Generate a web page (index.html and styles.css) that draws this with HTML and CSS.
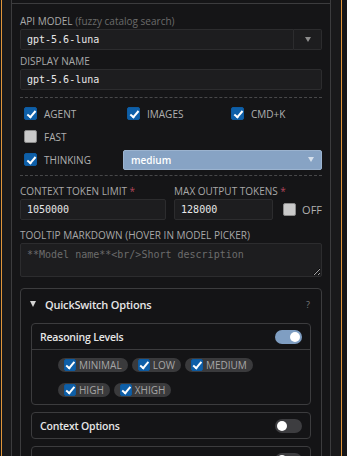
FILE: index.html
```html
<!DOCTYPE html>
<html lang="en">
<head>
    <meta charset="UTF-8">
    <meta name="viewport" content="width=device-width, initial-scale=1.0">
    <title>Model settings</title>
    <link rel="stylesheet" href="styles.css">
</head>
<body>
    <div class="frame">
        <div class="panel">
            <div class="panel-top"></div>
            <div class="panel-body">
                <!-- Model -->
                <label class="field-label">API MODEL <span class="hint">(fuzzy catalog search)</span></label>
                <div class="combo">
                    <input class="text-input" value="gpt-5.6-luna">
                    <div class="combo-btn"><span class="caret"></span></div>
                </div>

                <label class="field-label gap">DISPLAY NAME</label>
                <input class="text-input" value="gpt-5.6-luna">

                <div class="sep"></div>

                <!-- Capabilities -->
                <div class="caps">
                    <div class="cap"><span class="cb on"></span>AGENT</div>
                    <div class="cap"><span class="cb on"></span>IMAGES</div>
                    <div class="cap"><span class="cb on"></span>CMD+K</div>
                    <div class="cap"><span class="cb"></span>FAST</div>
                    <div></div>
                    <div></div>
                    <div class="cap"><span class="cb on"></span>THINKING</div>
                    <div class="thinking-select">medium<span class="caret light"></span></div>
                </div>

                <div class="sep flush"></div>

                <!-- Tokens -->
                <div class="token-row">
                    <div class="token-field wide">
                        <label class="field-label">CONTEXT TOKEN LIMIT <span class="req">*</span></label>
                        <input class="text-input" value="1050000">
                    </div>
                    <div class="token-field narrow">
                        <label class="field-label">MAX OUTPUT TOKENS <span class="req">*</span></label>
                        <input class="text-input" value="128000">
                    </div>
                    <div class="cap off-toggle"><span class="cb"></span>OFF</div>
                </div>

                <label class="field-label tip">TOOLTIP MARKDOWN (HOVER IN MODEL PICKER)</label>
                <textarea class="text-area" placeholder="**Model name**<br/>Short description"></textarea>

                <!-- QuickSwitch -->
                <div class="qs">
                    <div class="qs-head">
                        <span class="qs-arrow"></span>
                        <span class="qs-title">QuickSwitch Options</span>
                        <span class="qs-help">?</span>
                    </div>
                    <div class="qs-body">
                        <div class="card">
                            <div class="card-head open">
                                <span>Reasoning Levels</span>
                                <span class="toggle on"></span>
                            </div>
                            <div class="chips">
                                <span class="chip"><span class="cb on"></span>MINIMAL</span>
                                <span class="chip"><span class="cb on"></span>LOW</span>
                                <span class="chip"><span class="cb on"></span>MEDIUM</span>
                                <span class="chip"><span class="cb on"></span>HIGH</span>
                                <span class="chip"><span class="cb on"></span>XHIGH</span>
                            </div>
                        </div>
                        <div class="card">
                            <div class="card-head">
                                <span>Context Options</span>
                                <span class="toggle"></span>
                            </div>
                        </div>
                        <div class="card">
                            <div class="card-head">
                                <span>Cost Tracking</span>
                                <span class="toggle"></span>
                            </div>
                        </div>
                    </div>
                </div>
            </div>
        </div>
    </div>
</body>
</html>
```

FILE: styles.css
```css
* {
    box-sizing: border-box;
}
body {
    margin: 0;
    background: #161618;
    font-family: "Open Sans", "Noto Sans", sans-serif;
    overflow: hidden;
}
.frame {
    width: 341px;
    height: 456px;
    margin-left: 1px;
    padding: 0 10px 0 9px;
    border-left: 1px solid #e0953a;
    border-right: 1px solid #e0953a;
    background: #19191b;
    overflow: hidden;
}
.panel {
    width: 320px;
    min-height: 456px;
    border-left: 1px solid #3c3c3e;
    border-right: 1px solid #3c3c3e;
    background: #151517;
}
.panel-top {
    height: 4px;
    border-bottom: 1px solid #3c3c3e;
}
.panel-body {
    padding: 11px 8px 0;
}

/* labels & inputs */
.field-label {
    display: block;
    font-size: 10px;
    line-height: 13px;
    color: #a8a8a8;
    margin-bottom: 1px;
    white-space: nowrap;
}
.field-label.gap {
    margin-top: 5px;
}
.field-label .hint {
    color: #6b6b6b;
}
.field-label .req {
    color: #b0455a;
}
.text-input {
    display: block;
    width: 100%;
    height: 21px;
    padding: 0 6px;
    border: 1px solid #2c2c2e;
    border-radius: 2px;
    background: #1d1d1f;
    color: #e8e8e8;
    font: 10px "DejaVu Sans Mono", monospace;
    outline: none;
}
.combo {
    display: flex;
}
.combo .text-input {
    flex: 1;
    border-radius: 2px 0 0 2px;
}
.combo-btn {
    width: 28px;
    height: 21px;
    border: 1px solid #2c2c2e;
    border-left: none;
    border-radius: 0 2px 2px 0;
    background: #1d1d1f;
    display: flex;
    align-items: center;
    justify-content: center;
}
.caret {
    width: 0;
    height: 0;
    border-left: 3px solid transparent;
    border-right: 3px solid transparent;
    border-top: 5px solid #8c8c8c;
}
.caret.light {
    border-top-color: #d6e0ec;
}
.sep {
    margin-top: 7px;
    border-top: 1px dashed #48484a;
}
.sep.flush {
    margin-top: 0;
}

/* checkboxes */
.cb {
    position: relative;
    display: inline-block;
    flex: none;
    width: 13px;
    height: 13px;
    border: 1px solid #8a8a8a;
    border-radius: 2px;
    background: #c9c9c9;
}
.cb.on {
    border-color: #0d5aa0;
    background: #0e5fa8;
}
.cb.on::after {
    content: "";
    position: absolute;
    left: 3.5px;
    top: 0.5px;
    width: 3px;
    height: 7px;
    border-right: 2px solid #fff;
    border-bottom: 2px solid #fff;
    transform: rotate(40deg);
}
.caps {
    display: grid;
    grid-template-columns: 103px 104px 1fr;
    grid-auto-rows: 23px;
    padding: 4px 0;
}
.cap {
    display: flex;
    align-items: center;
    gap: 7px;
    padding-left: 4px;
    font-size: 10px;
    color: #b0b0b0;
}
.thinking-select {
    grid-column: 2 / 4;
    align-self: center;
    height: 20px;
    display: flex;
    align-items: center;
    justify-content: space-between;
    padding: 0 7px;
    border: 1px solid #9bb3cf;
    border-radius: 2px;
    background: #87a3c4;
    color: #fff;
    font-size: 10px;
    font-weight: 600;
}

/* token row */
.token-row {
    display: flex;
    align-items: flex-end;
    margin-top: 9px;
}
.token-field.wide {
    width: 147px;
    margin-right: 8px;
}
.token-field.narrow {
    width: 99px;
    margin-right: 10px;
}
.off-toggle {
    height: 21px;
    gap: 6px;
    padding-left: 0;
    font-size: 11px;
}
.field-label.tip {
    margin-top: 9px;
}
.text-area {
    display: block;
    width: 100%;
    height: 34px;
    padding: 4px 6px;
    border: 1px solid #2c2c2e;
    border-radius: 2px;
    background: #1d1d1f;
    color: #e8e8e8;
    font: 10px/14px "DejaVu Sans Mono", monospace;
    resize: vertical;
    outline: none;
}
.text-area::placeholder {
    color: #6c6c6c;
}

/* quickswitch */
.qs {
    margin-top: 11px;
    border: 1px solid #3c3c3e;
    border-radius: 4px;
    background: #141416;
}
.qs-head {
    display: flex;
    align-items: center;
    height: 30px;
    padding: 0 11px 0 9px;
}
.qs-arrow {
    width: 0;
    height: 0;
    border-left: 3px solid transparent;
    border-right: 3px solid transparent;
    border-top: 6px solid #d4d4d4;
    margin-right: 9px;
}
.qs-title {
    flex: 1;
    font-size: 11px;
    font-weight: 600;
    letter-spacing: -0.2px;
    color: #e6e6e6;
}
.qs-help {
    font-size: 9px;
    color: #7a7a7a;
}
.qs-body {
    padding: 4px 10px 0;
}
.card {
    border: 1px solid #3c3c3e;
    border-radius: 4px;
    margin-bottom: 7px;
}
.card-head {
    display: flex;
    align-items: center;
    justify-content: space-between;
    height: 25px;
    padding: 0 8px;
    font-size: 10.5px;
    font-weight: 600;
    letter-spacing: -0.2px;
    color: #e6e6e6;
}
.card-head.open {
    height: 26px;
    border-bottom: 1px solid #3c3c3e;
}
.toggle {
    position: relative;
    width: 27px;
    height: 14px;
    border-radius: 7px;
    background: #3d3d40;
}
.toggle::after {
    content: "";
    position: absolute;
    top: 2px;
    left: 2px;
    width: 10px;
    height: 10px;
    border-radius: 50%;
    background: #fff;
}
.toggle.on {
    background: #7f9ec2;
}
.toggle.on::after {
    left: 15px;
}
.chips {
    display: flex;
    flex-wrap: wrap;
    gap: 11px 4px;
    padding: 8px 26px 7px;
}
.chip {
    display: flex;
    align-items: center;
    gap: 3px;
    height: 14px;
    padding: 0 6px;
    border-radius: 7px;
    background: #3a3a3c;
    font-size: 10px;
    color: #a6a6a6;
}
.chip .cb {
    width: 12px;
    height: 12px;
}
.chip .cb.on::after {
    left: 3px;
    top: 0;
    height: 6.5px;
}
```
